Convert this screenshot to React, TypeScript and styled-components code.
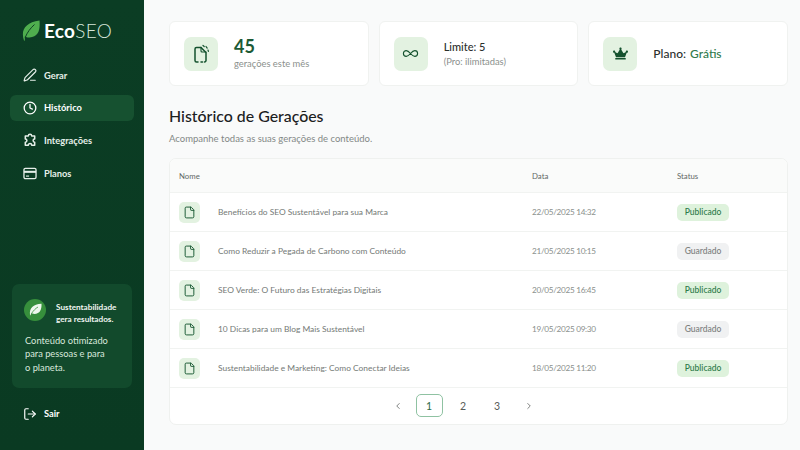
import React from "react";
import styled, { createGlobalStyle } from "styled-components";
import { File, PenLine, LogOut, Infinity as InfinityIcon, ChevronLeft, ChevronRight, Clock } from "lucide-react";
import { FaCrown } from "react-icons/fa";

const GlobalStyle = createGlobalStyle`
  html, body { margin: 0; padding: 0; }
  body { font-family: "Lato", "Liberation Sans", sans-serif; background: #f9fafa; }
`;

const rows = [
  { name: "Benefícios do SEO Sustentável para sua Marca", date: "22/05/2025 14:32", status: "Publicado" },
  { name: "Como Reduzir a Pegada de Carbono com Conteúdo", date: "21/05/2025 10:15", status: "Guardado" },
  { name: "SEO Verde: O Futuro das Estratégias Digitais", date: "20/05/2025 16:45", status: "Publicado" },
  { name: "10 Dicas para um Blog Mais Sustentável", date: "19/05/2025 09:30", status: "Guardado" },
  { name: "Sustentabilidade e Marketing: Como Conectar Ideias", date: "18/05/2025 11:20", status: "Publicado" },
];

const LeafMark = () => (
  <svg width="18" height="21" viewBox="0 0 18 21">
    <path d="M2 20.500C-1.500 10.500 3 2.500 17.500.5c.8 9.500-1 16.500-10 17-1.800.1-3.500-.3-4.600-1.200L2.800 20.800z" fill="#4fae4e" />
    <path d="M3.200 17.500C5.200 12.500 8.500 8 12.500 4.500" fill="none" stroke="#0d4025" strokeWidth="1" />
  </svg>
);

const SmallLeaf = () => (
  <svg width="13" height="13" viewBox="0 0 13 13">
    <path d="M1 12C.200 5 4 1.200 12.500.800c.300 6-1.500 10-7 10.200-1.500 0-2.500-.3-3.300-.9L1.500 12.500z" fill="#eef7ec" />
    <path d="M2.500 10.500C4.500 7.500 6.500 5.500 9 4" fill="none" stroke="#3b963f" strokeWidth=".8" />
  </svg>
);

const GeneratedFile = () => (
  <svg width="18" height="20" viewBox="0 0 18 20" fill="none" stroke="currentColor" strokeWidth="1.500" strokeLinecap="round" strokeLinejoin="round">
    <path d="M9 3.500H4.500a1.500 1.500 0 0 0-1.500 1.500v11.500a1.500 1.500 0 0 0 1.500 1.500H6" />
    <path d="M9 3.500l5 5v8a1.500 1.500 0 0 1-1.500 1.500" />
    <path d="M9 3.500v3.500a1 1 0 0 0 1 1h4" strokeWidth="1.100" />
    <path d="M9 18h1.500" strokeDasharray="1.500 1.500" />
    <path d="M11 1.500l1.200 1M14 2.500l1.200 1.600M16 6l.4 1.400" strokeWidth="1.200" />
  </svg>
);

const PuzzleIcon = () => (
  <svg width="14" height="15" viewBox="0 0 14 15" fill="none" stroke="currentColor" strokeWidth="1.500" strokeLinejoin="round">
    <path d="M5.300 3a1.700 1.700 0 1 1 3.400 0h3v3a1.600 1.600 0 0 0 0 3.200v3h-3a1.700 1.700 0 0 0-3.400 0h-3v-3a1.600 1.600 0 0 0 0-3.200v-3z" />
  </svg>
);

const CardGlyph = () => (
  <svg width="14" height="13" viewBox="0 0 15 14" fill="none" stroke="currentColor" strokeWidth="1.400">
    <rect x="1" y="1.500" width="13" height="11" rx="1.500" />
    <path d="M1 5.200h13" strokeWidth="2.200" />
    <path d="M3.200 9.800h3.300" strokeWidth="1.200" />
  </svg>
);

const App = () => (
  <>
    <GlobalStyle />
    <Page>
      <Sidebar>
        <Logo>
          <LeafMark />
          <LogoText>
            <b>Eco</b>SEO
          </LogoText>
        </Logo>
        <Nav>
          <NavItem><PenLine size={14} /> Gerar</NavItem>
          <NavItem $active><Clock size={14} strokeWidth={2.2} /> Histórico</NavItem>
          <NavItem><PuzzleIcon /> Integrações</NavItem>
          <NavItem><CardGlyph /> Planos</NavItem>
        </Nav>
        <Promo>
          <PromoHead>
            <PromoBadge><SmallLeaf /></PromoBadge>
            <PromoTitle>Sustentabilidade gera resultados.</PromoTitle>
          </PromoHead>
          <PromoText>Conteúdo otimizado<br />para pessoas e para<br />o planeta.</PromoText>
        </Promo>
        <Logout><LogOut size={14} /> Sair</Logout>
      </Sidebar>
      <Main>
        <Cards>
          <Card>
            <CardIcon><GeneratedFile /></CardIcon>
            <div>
              <BigNumber>45</BigNumber>
              <CardNote>gerações este mês</CardNote>
            </div>
          </Card>
          <Card>
            <CardIcon><InfinityIcon size={17} strokeWidth={1.6} /></CardIcon>
            <div>
              <CardLabel>Limite: 5</CardLabel>
              <CardNote>(Pro: ilimitadas)</CardNote>
            </div>
          </Card>
          <Card>
            <CardIcon><FaCrown size={15} /></CardIcon>
            <PlanLabel>Plano: <span>Grátis</span></PlanLabel>
          </Card>
        </Cards>
        <Title>Histórico de Gerações</Title>
        <Subtitle>Acompanhe todas as suas gerações de conteúdo.</Subtitle>
        <Table>
          <HeadRow>
            <span>Nome</span>
            <span>Data</span>
            <span>Status</span>
          </HeadRow>
          {rows.map((row) => (
            <Row key={row.name}>
              <NameCell>
                <RowIcon><File size={13} strokeWidth={1.8} /></RowIcon>
                {row.name}
              </NameCell>
              <DateCell>{row.date}</DateCell>
              <div><Status $published={row.status === "Publicado"}>{row.status}</Status></div>
            </Row>
          ))}
          <Pagination>
            <PageArrow><ChevronLeft size={10} /></PageArrow>
            <PageButton $active>1</PageButton>
            <PageButton>2</PageButton>
            <PageButton>3</PageButton>
            <PageArrow><ChevronRight size={10} /></PageArrow>
          </Pagination>
        </Table>
      </Main>
    </Page>
  </>
);

export default App;

const Page = styled.div`
  display: flex;
  width: 800px;
  height: 450px;
  overflow: hidden;
`;

const Sidebar = styled.aside`
  flex: 0 0 144px;
  display: flex;
  flex-direction: column;
  background: linear-gradient(180deg, #0b3d24 0%, #0a3a22 100%);
  color: #fff;
  padding: 19px 10px 0;
  box-sizing: border-box;
`;

const Logo = styled.div`
  display: flex;
  align-items: center;
  gap: 4px;
  padding-left: 12px;
  height: 22px;
`;

const LogoText = styled.div`
  font-size: 19px;
  font-weight: 300;
  color: #d5e6da;
  letter-spacing: 0.3px;
  b { font-weight: 700; color: #fff; }
`;

const Nav = styled.nav`
  display: flex;
  flex-direction: column;
  gap: 6.200px;
  margin-top: 21px;
`;

const NavItem = styled.div<{ $active?: boolean }>`
  display: flex;
  align-items: center;
  gap: 7px;
  height: 26.500px;
  padding-left: 13px;
  border-radius: 6px;
  font-size: 9.300px;
  font-weight: 700;
  color: ${(p) => (p.$active ? "#fff" : "#e6efe9")};
  background: ${(p) => (p.$active ? "#165130" : "transparent")};
`;

const Promo = styled.div`
  margin: auto 2px 0;
  padding: 15px 12px 14px;
  border-radius: 7px;
  background: #124a2c;
`;

const PromoHead = styled.div`
  display: flex;
  align-items: flex-start;
  gap: 10px;
`;

const PromoBadge = styled.div`
  flex: 0 0 22px;
  height: 22px;
  border-radius: 50%;
  background: #378f3c;
  display: flex;
  align-items: center;
  justify-content: center;
`;

const PromoTitle = styled.div`
  margin-top: 2px;
  font-size: 8.200px;
  font-weight: 700;
  line-height: 12px;
  color: #f1f6f2;
`;

const PromoText = styled.div`
  margin-top: 9px;
  padding-left: 1px;
  font-size: 9.300px;
  line-height: 13.500px;
  color: #d9e8dd;
`;

const Logout = styled.div`
  display: flex;
  align-items: center;
  gap: 7px;
  height: 27px;
  padding-left: 13px;
  margin: 12px 0 23px;
  font-size: 9.300px;
  font-weight: 700;
`;

const Main = styled.main`
  flex: 1;
  min-width: 0;
  padding: 21px 12px 0 25px;
  box-sizing: border-box;
`;

const Cards = styled.div`
  display: grid;
  grid-template-columns: repeat(3, 1fr);
  gap: 10px;
`;

const Card = styled.div`
  display: flex;
  align-items: center;
  gap: 16px;
  height: 65px;
  padding-left: 14px;
  box-sizing: border-box;
  background: #fff;
  border: 1px solid #f0f2f0;
  border-radius: 6px;
`;

const CardIcon = styled.div`
  flex: 0 0 34px;
  height: 34px;
  display: flex;
  align-items: center;
  justify-content: center;
  border-radius: 7px;
  background: #e3f2e1;
  color: #14522e;
`;

const BigNumber = styled.div`
  font-size: 18px;
  font-weight: 700;
  line-height: 21px;
  color: #1c5a35;
`;

const CardLabel = styled.div`
  font-size: 11px;
  font-weight: 500;
  line-height: 16px;
  color: #2b2f2d;
`;

const CardNote = styled.div`
  font-size: 9.400px;
  line-height: 14px;
  color: #8b908d;
`;

const PlanLabel = styled.div`
  font-size: 12px;
  font-weight: 500;
  color: #2b2f2d;
  span { color: #2f7a4b; margin-left: 1px; }
`;

const Title = styled.h1`
  margin: 20px 0 0;
  font-size: 15.900px;
  font-weight: 500;
  line-height: 20px;
  color: #1c211e;
`;

const Subtitle = styled.p`
  margin: 6px 0 0;
  font-size: 9.500px;
  line-height: 14px;
  color: #838886;
`;

const Table = styled.div`
  margin-top: 12px;
  background: #fff;
  border: 1px solid #eff1ef;
  border-radius: 7px;
  overflow: hidden;
`;

const HeadRow = styled.div`
  display: grid;
  grid-template-columns: 353px 145px 1fr;
  align-items: center;
  height: 33px;
  padding-left: 9px;
  background: #fafbfa;
  font-size: 7.800px;
  color: #636865;
`;

const Row = styled.div`
  display: grid;
  grid-template-columns: 353px 145px 1fr;
  align-items: center;
  height: 39px;
  box-sizing: border-box;
  padding-left: 9px;
  border-top: 1px solid #f1f3f1;
  font-size: 8.400px;
  color: #8a8f8c;
`;

const NameCell = styled.div`
  display: flex;
  align-items: center;
  gap: 18px;
  color: #747976;
`;

const DateCell = styled.span`
  font-size: 8.200px;
  letter-spacing: -0.3px;
`;

const RowIcon = styled.div`
  flex: 0 0 21px;
  height: 21px;
  display: flex;
  align-items: center;
  justify-content: center;
  border-radius: 5px;
  background: #e3f2e1;
  color: #1c5a35;
`;

const Status = styled.span<{ $published: boolean }>`
  display: inline-flex;
  align-items: center;
  justify-content: center;
  width: 52px;
  height: 17px;
  border-radius: 5px;
  font-size: 8.500px;
  font-weight: 500;
  background: ${(p) => (p.$published ? "#def2dc" : "#f0f1f2")};
  color: ${(p) => (p.$published ? "#2c7a49" : "#7c807e")};
`;

const Pagination = styled.div`
  display: flex;
  align-items: center;
  justify-content: center;
  gap: 7px;
  height: 35px;
  padding: 0 31px 1px 0;
  border-top: 1px solid #f1f3f1;
`;

const PageButton = styled.div<{ $active?: boolean }>`
  width: 27px;
  height: 23px;
  box-sizing: border-box;
  display: flex;
  align-items: center;
  justify-content: center;
  border-radius: 5px;
  font-size: 10.500px;
  color: ${(p) => (p.$active ? "#2c6a45" : "#585c5a")};
  border: 1px solid ${(p) => (p.$active ? "#8fc2a2" : "transparent")};
`;

const PageArrow = styled.div`
  width: 22px;
  height: 23px;
  display: flex;
  align-items: center;
  justify-content: center;
  color: #666a68;
`;
